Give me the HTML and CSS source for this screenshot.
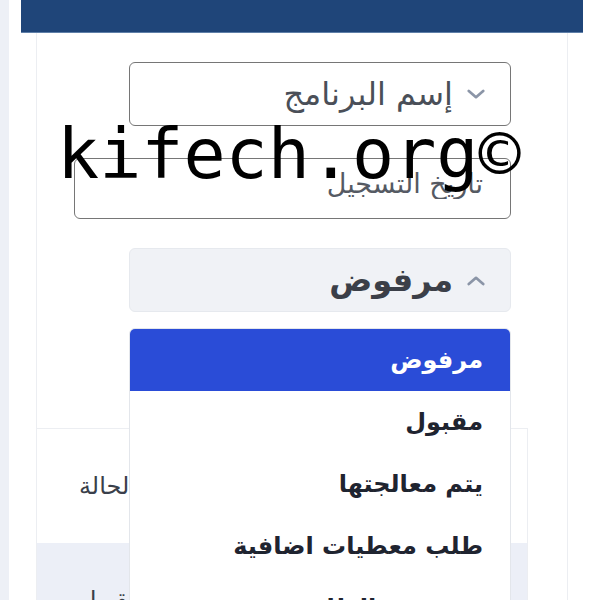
FILE: index.html
```html
<!DOCTYPE html>
<html lang="ar">
<head>
<meta charset="utf-8">
<link rel="stylesheet" href="styles.css">
</head>
<body>
<div class="page">
  <div class="strip"></div>
  <div class="main">
    <div class="topbar"></div>
    <div class="card">
      <div class="form" dir="rtl">
        <div class="select select-name">
          <svg class="chev" viewBox="0 0 20 12" width="18" height="11"><path d="M2 2 L10 9 L18 2" fill="none" stroke="#8b95a7" stroke-width="3" stroke-linecap="round" stroke-linejoin="round"/></svg>
          <span class="select-text">إسم البرنامج</span>
        </div>
        <div class="date-box">
          <div class="date-clip"><span class="date-text">تاريخ التسجيل</span></div>
        </div>
        <div class="status-wrap">
          <div class="select select-open">
            <svg class="chev" viewBox="0 0 20 12" width="18" height="11"><path d="M2 10 L10 3 L18 10" fill="none" stroke="#8b95a7" stroke-width="3" stroke-linecap="round" stroke-linejoin="round"/></svg>
            <span class="select-text bold">مرفوض</span>
          </div>
          <ul class="menu">
            <li class="menu-item active">مرفوض</li>
            <li class="menu-item">مقبول</li>
            <li class="menu-item">يتم معالجتها</li>
            <li class="menu-item">طلب معطيات اضافية</li>
            <li class="menu-item">تم رفض الطلب</li>
          </ul>
        </div>
      </div>
      <div class="table">
        <div class="row head"><div class="cell">الحالة</div></div>
        <div class="row alt"><div class="cell">مقبول</div></div>
      </div>
    </div>
  </div>
</div>
<div class="watermark">kifech.org©</div>
</body>
</html>
```

FILE: styles.css
```css
html, body {
  margin: 0;
  padding: 0;
  background: #ffffff;
  font-family: "DejaVu Sans", "Noto Sans", sans-serif;
  overflow: hidden;
}
.page {
  display: flex;
  height: 600px;
}
.strip {
  width: 9px;
  background: #edf0f6;
  flex: none;
}
.main {
  flex: 1;
  padding: 0 12px;
  display: flex;
  flex-direction: column;
}
.topbar {
  height: 33px;
  background: #1f4579;
  border-bottom: 1px solid #5f7fa8;
  box-sizing: border-box;
  flex: none;
}
.card {
  flex: 1;
  margin: 0 15px 0 15px;
  border-left: 1px solid #eceef2;
  border-right: 1px solid #eceef2;
  overflow: hidden;
}
.form {
  padding: 29px 56px 0 0;
  display: flex;
  flex-direction: column;
  align-items: flex-start;
}
.select {
  width: 382px;
  height: 64px;
  box-sizing: border-box;
  border-radius: 6px;
  display: flex;
  align-items: center;
  padding-right: 25px;
  gap: 14px;
}
.select-name {
  border: 1px solid #767676;
  background: #fff;
}
.select-text {
  font-size: 32px;
  color: #4a4f58;
  line-height: 1;
}
.select-text.bold {
  font-size: 32px;
  font-weight: bold;
  color: #3b3f48;
}
.chev {
  flex: none;
}
.date-box {
  margin-top: 32px;
  width: 437px;
  height: 61px;
  box-sizing: border-box;
  border: 1px solid #767676;
  border-radius: 6px;
  padding-right: 27px;
}
.date-clip {
  height: 40px;
  overflow: hidden;
  padding-top: 10px;
  box-sizing: border-box;
}
.date-text {
  font-size: 27px;
  line-height: 30px;
  color: #555a63;
}
.status-wrap {
  margin-top: 29px;
  position: relative;
}
.select-open {
  background: #f0f2f6;
  border: 1px solid #e6e9ee;
}
.menu {
  position: absolute;
  top: 80px;
  right: 0;
  width: 382px;
  margin: 0;
  padding: 0;
  list-style: none;
  background: #fff;
  border: 1px solid #e3e6eb;
  border-radius: 6px 6px 0 0;
  box-sizing: border-box;
  z-index: 5;
}
.menu-item {
  height: 62px;
  display: flex;
  align-items: center;
  padding-right: 27px;
  font-size: 24px;
  font-weight: bold;
  color: #1f2430;
}
.menu-item.active {
  background: #2a4cd7;
  color: #fff;
  border-radius: 5px 5px 0 0;
}
.table {
  margin-top: 116px;
  width: 490px;
  border-top: 1px solid #eceef2;
  border-right: 1px solid #eceef2;
}
.row {
  height: 114px;
  display: flex;
  align-items: center;
}
.row.alt {
  background: #eceff7;
}
.cell {
  padding-left: 42px;
  font-size: 24px;
  color: #3a3f4a;
  direction: rtl;
}
.watermark {
  position: absolute;
  left: 57px;
  top: 119px;
  font-family: "DejaVu Sans Mono", monospace;
  font-size: 70px;
  color: #000;
  line-height: 1;
  z-index: 10;
  white-space: nowrap;
}
```
